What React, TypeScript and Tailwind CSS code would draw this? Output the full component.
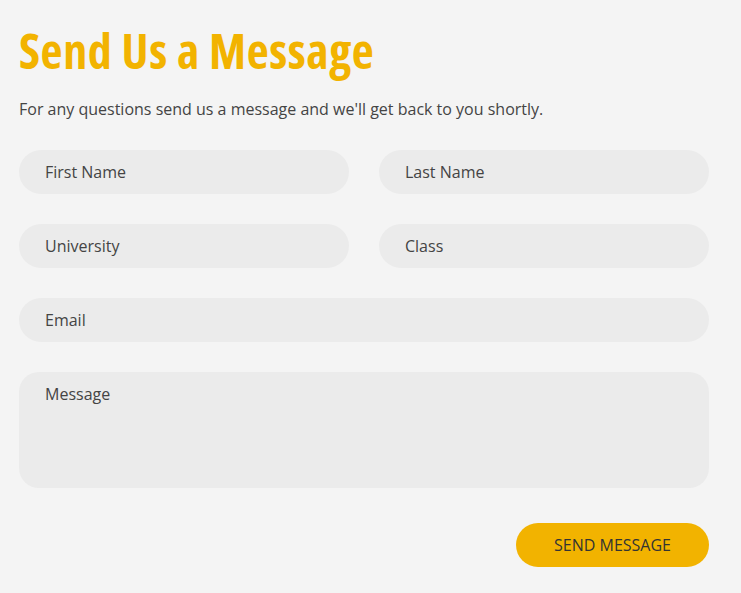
export default function App() {
  const field =
    'h-[44px] w-full rounded-full bg-[#ebebeb] px-[26px] text-[16px] text-[#333] placeholder:text-[#444] outline-none';

  return (
    <div className="min-h-[593px] w-full bg-[#f4f4f4] font-['Open_Sans',sans-serif]">
      <div className="w-[709px] pl-[19px] pt-[22px]">
        <h1 className="text-[48px] font-bold leading-[58px] tracking-[0.6px] text-[#f2b300] [font-stretch:75%]">
          Send Us a Message
        </h1>
        <p className="mt-[18px] text-[16px] leading-[22px] text-[#444]">
          For any questions send us a message and we&apos;ll get back to you shortly.
        </p>
        <form className="mt-[30px] flex flex-col gap-[30px]">
          <div className="grid grid-cols-2 gap-[30px]">
            <input className={field} placeholder="First Name" />
            <input className={field} placeholder="Last Name" />
          </div>
          <div className="grid grid-cols-2 gap-[30px]">
            <input className={field} placeholder="University" />
            <input className={field} placeholder="Class" />
          </div>
          <input className={field} placeholder="Email" />
          <textarea
            className="h-[116px] w-full resize-none rounded-[20px] bg-[#ebebeb] px-[26px] py-[11px] text-[16px] leading-[22px] text-[#333] placeholder:text-[#444] outline-none"
            placeholder="Message"
          />
          <div className="mt-[5px] flex justify-end">
            <button
              type="button"
              className="h-[44px] w-[193px] rounded-full bg-[#f2b300] text-[16px] uppercase text-[#333]"
            >
              Send Message
            </button>
          </div>
        </form>
      </div>
    </div>
  );
}
